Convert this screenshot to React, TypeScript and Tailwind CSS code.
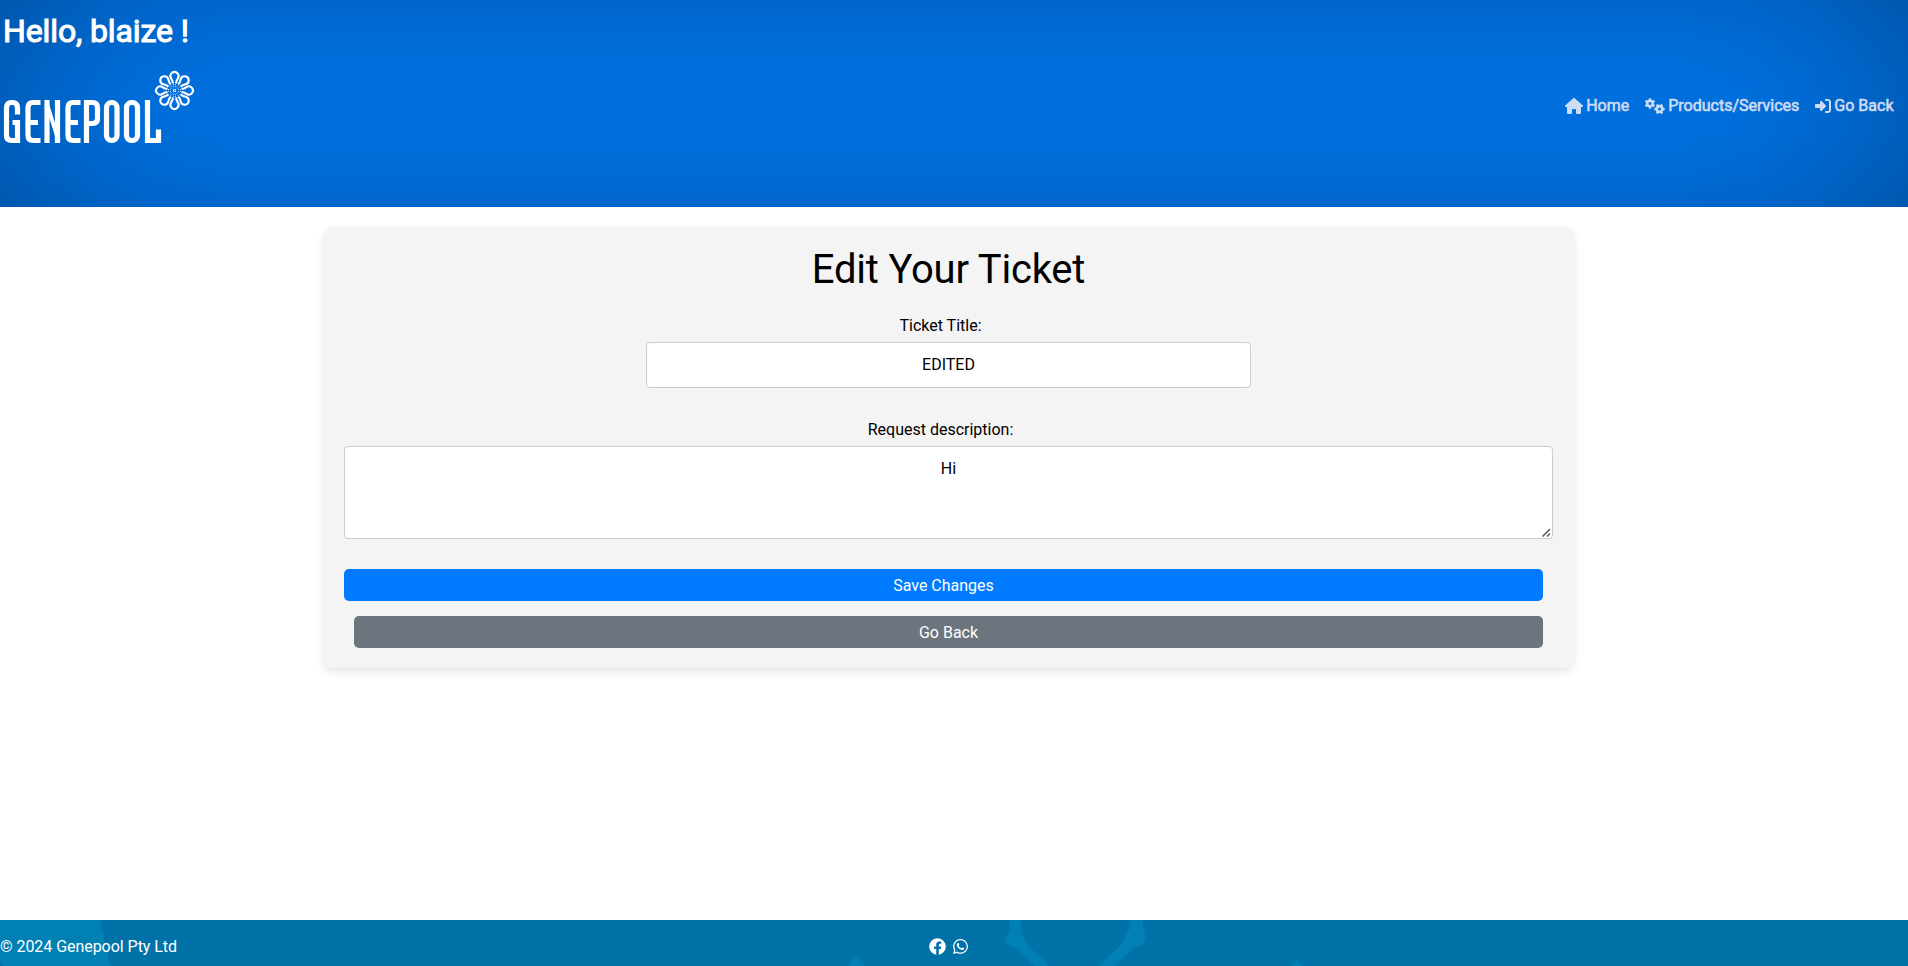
import { FaFacebook, FaWhatsapp } from "react-icons/fa";
import { FaRightToBracket, FaHouse, FaGears } from "react-icons/fa6";

const angles = [0, 45, 90, 135, 180, 225, 270, 315];

function Logo() {
  return (
    <svg width="200" height="90" viewBox="0 0 200 90" className="block" aria-label="Genepool">
      <g fill="none" stroke="#fff" strokeWidth="5.200">
        <path d="M17.5 53.500V46.500q0-5-5-5h-1q-5 0-5 5v28q0 5 5 5h6V61.500H12.500" />
        <path d="M40.500 41.500H33q-5 0-5 5v28q0 5 5 5h7.500M28 61.500h10" />
        <path d="M47 82V39M57.500 82V39" />
        <path d="M46.500 41.500l12 38" strokeWidth="4" />
        <path d="M80.500 41.500H73q-5 0-5 5v28q0 5 5 5h7.500M68 61.500h10" />
        <path d="M86.500 82V41.500h6q5 0 5 5v11q0 5-5 5h-6" />
        <rect x="106.500" y="41.500" width="10.500" height="38" rx="5" />
        <rect x="126.500" y="41.500" width="11" height="38" rx="5" />
        <path d="M147.500 39V79.500h11V68.500" />
      </g>
      <g transform="translate(174.500 29.500)" fill="none" stroke="#fff">
        {angles.map((a) => (
          <g key={a} transform={`rotate(${a})`}>
            <path d="M-1.600 -7L-2 -9.500L-3.500 -12.200A4.100 4.100 0 1 1 3.500 -12.200L2 -9.500L1.600 -7" strokeWidth="2.100" />
            <path d="M-0.900 -6.500V-3.500M0.900 -6.500V-3.500" strokeWidth="0.800" strokeDasharray="1.200 1" />
          </g>
        ))}
        <rect x="-1.200" y="-1.200" width="2.400" height="2.400" strokeWidth="0.700" />
      </g>
    </svg>
  );
}

export default function App() {
  return (
    <div className="flex h-[966px] flex-col overflow-hidden bg-white font-['Roboto',sans-serif] text-base leading-6 text-black">
      <header className="h-[207px] shrink-0 bg-[#006fde] bg-[linear-gradient(to_right,rgba(0,0,0,0.15)_0px,rgba(0,0,0,0.1)_50px,rgba(0,0,0,0.055)_100px,rgba(0,0,0,0.02)_160px,rgba(0,0,0,0)_240px,rgba(0,0,0,0)_1668px,rgba(0,0,0,0.02)_1748px,rgba(0,0,0,0.055)_1808px,rgba(0,0,0,0.1)_1858px,rgba(0,0,0,0.15)_1908px),linear-gradient(to_bottom,rgba(0,0,0,0.08)_0px,rgba(0,0,0,0.04)_35px,rgba(0,0,0,0.01)_70px,rgba(0,0,0,0)_103px,rgba(0,0,0,0.01)_137px,rgba(0,0,0,0.04)_172px,rgba(0,0,0,0.08)_207px)] pt-3 text-white">
        <h1 className="pl-[3px] text-[32px] leading-[38px] font-normal tracking-[-0.12px] [-webkit-text-stroke:1.1px_white] [text-shadow:0_1px_2px_rgba(0,0,0,0.15)]">Hello, blaize !</h1>
        <div className="mt-[11px] flex items-center justify-between">
          <Logo />
          <nav className="flex gap-4 pr-[14.500px] text-base text-[#ccdcf3] [-webkit-text-stroke:0.6px_#ccdcf3]">
            <a className="flex items-center gap-[3.500px]"><FaHouse className="h-4 w-[18px]" strokeWidth="0" />Home</a>
            <a className="flex items-center gap-[3px]"><FaGears className="h-4 w-5" strokeWidth="0" />Products/Services</a>
            <a className="flex items-center gap-[3px]"><FaRightToBracket className="size-4" strokeWidth="0" />Go Back</a>
          </nav>
        </div>
      </header>

      <main className="flex-1 pt-5">
        <form className="ml-[323px] flex h-[441px] w-[1251px] flex-col rounded-[10px] bg-[#f4f4f4] px-[21px] shadow-[0_4px_8px_rgba(0,0,0,0.1)]">
          <h2 className="mt-[19px] text-center text-[40px] leading-[48px] tracking-[-0.2px]">Edit Your Ticket</h2>
          <label className="mt-5 mr-4 text-center">Ticket Title:</label>
          <input className="mt-1 h-[46px] w-[605px] self-center rounded border border-[#ccc] bg-white pb-0.5 text-center" defaultValue="EDITED" />
          <label className="mt-[30px] mr-4 text-center">Request description:</label>
          <div className="relative mt-1 h-[93px]">
            <textarea className="block size-full resize-none rounded border border-[#ccc] bg-white p-[10px] text-center" defaultValue="Hi" />
            <svg className="absolute right-[2px] bottom-[2px]" width="9" height="9" stroke="#555" strokeWidth="1.500">
              <path d="M0.500 8.500L8 1M5 8.500L8 5.500" />
            </svg>
          </div>
          <button type="button" className="mt-[30px] mr-[10px] h-8 rounded-[5px] bg-[#007bff] pt-0.5 text-white">Save Changes</button>
          <button type="button" className="mt-[15px] mr-[10px] ml-[10px] h-8 rounded-[5px] bg-[#6c757d] pt-0.5 text-white">Go Back</button>
        </form>
      </main>

      <footer className="relative h-[46px] shrink-0 bg-[#0072a8] text-white">
        <svg className="absolute inset-0" width="1908" height="46" fill="#0080b3">
          <path d="M0 0H101V7L104 12V27L108 33V39L111 46H3L0 40Z" />
          <path d="M848 46L852 41L856 37L859 40L865 46Z" />
          <path d="M1009 0H1021V12L1028 26L1044 40L1049 46H1034L1028 39L1016 29L1004 22L1008 14L1010 8ZM1131 0H1142L1144 9L1146 19L1142 26L1135 27L1123 38L1115 46H1099L1104 41L1120 26L1129 10Z" />
          <path d="M1291 46L1295 42L1297 40L1300 43L1304 46Z" />
        </svg>
        <div className="relative flex h-full items-center pt-[7px]">
          <span className="w-[929px] tracking-[-0.05px]">© 2024 Genepool Pty Ltd</span>
          <div className="flex items-center gap-[6px]">
            <FaFacebook className="size-[17px]" />
            <FaWhatsapp className="size-[17px]" />
          </div>
        </div>
      </footer>
    </div>
  );
}
